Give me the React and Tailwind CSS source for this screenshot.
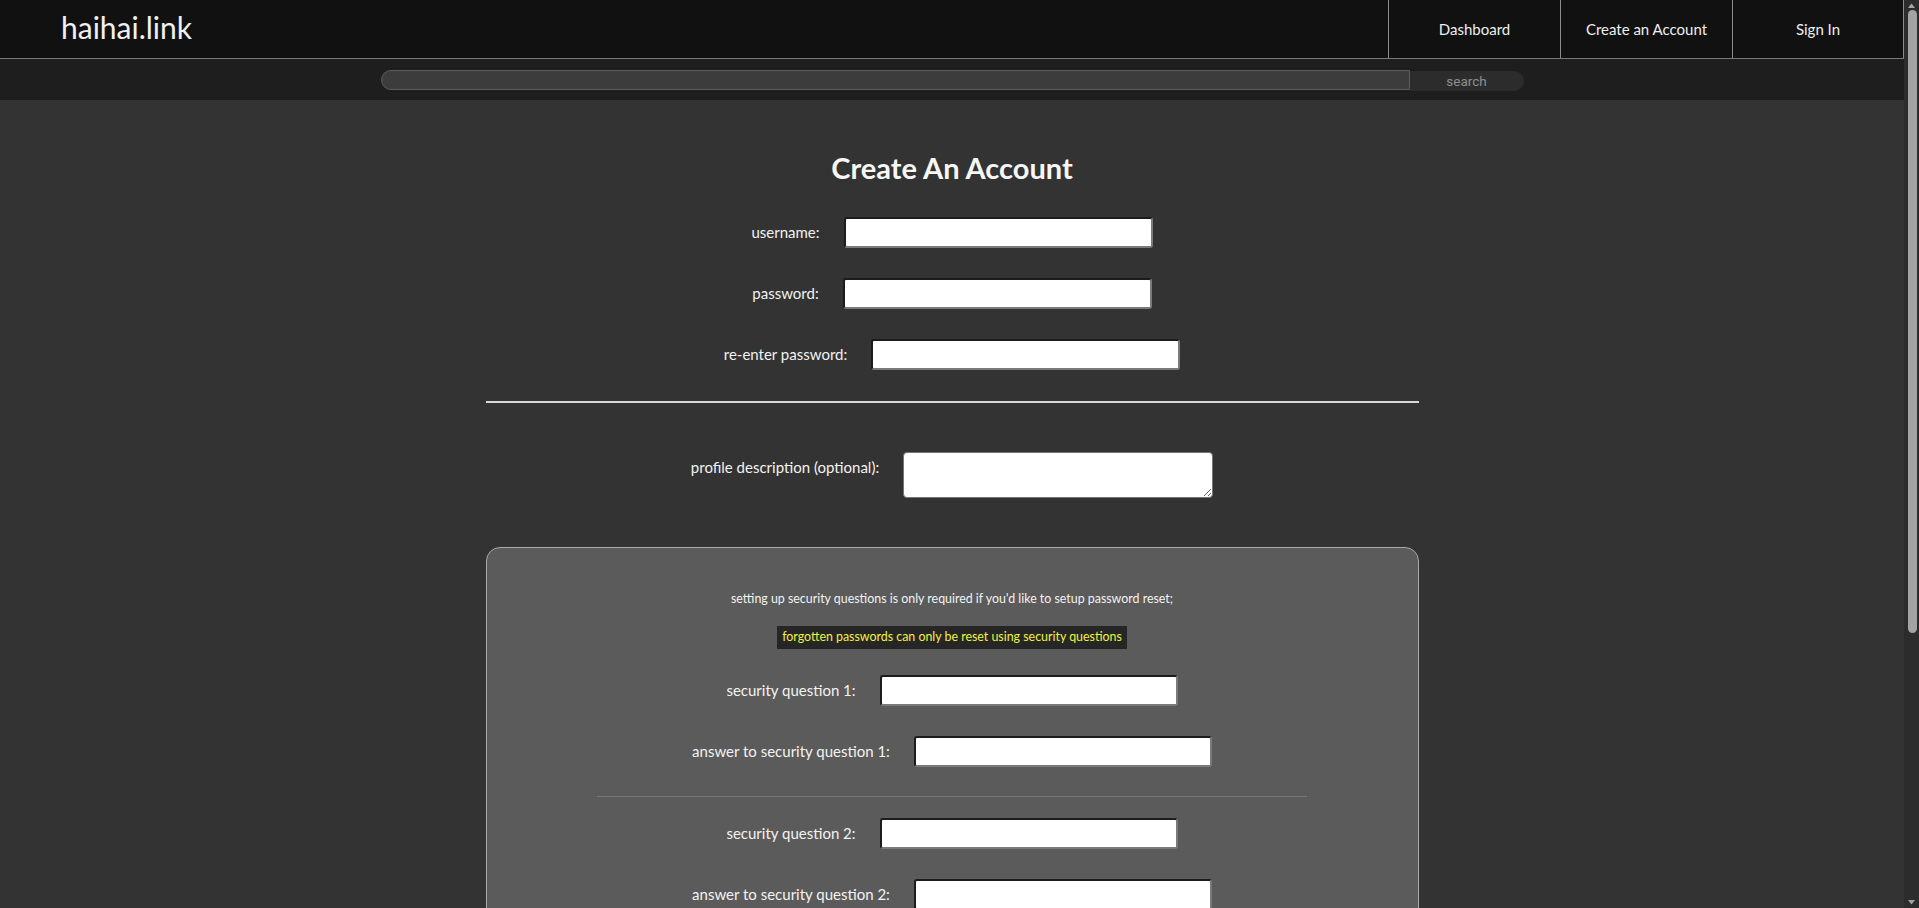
import React from "react";

const font = { fontFamily: "Lato, 'Open Sans', sans-serif" };

function Field({ label, w = "w-[309px]", textarea = false }) {
  return (
    <div className={`flex justify-center gap-[24px] ${textarea ? "items-start" : "items-center"}`}>
      <label className={`text-[15px] text-[#f2f2f2] ${textarea ? "mt-[4px]" : ""}`}>{label}</label>
      {textarea ? (
        <textarea className="w-[310px] h-[46px] bg-white border border-solid border-[#767676] rounded-[4px] outline-none" />
      ) : (
        <input
          type="text"
          className={`${w} h-[31px] bg-white rounded-[3px] border-2 border-solid border-t-[#1c1c1c] border-l-[#1c1c1c] border-r-[#7a7a7a] border-b-[#7a7a7a] outline-none`}
        />
      )}
    </div>
  );
}

function Scrollbar() {
  return (
    <aside className="sticky top-0 h-screen w-[15px] shrink-0 bg-[#2c2c2c] flex flex-col items-center">
      <svg width="9" height="9" viewBox="0 0 9 9" className="mt-[1px] shrink-0">
        <path d="M1 7 L4.5 2.5 L8 7 Z" fill="#a3a3a3" />
      </svg>
      <div className="w-[9px] h-[623px] rounded-full bg-[#a3a3a3] ml-[1px]" />
      <div className="flex-1" />
      <svg width="9" height="9" viewBox="0 0 9 9" className="mb-[1px] shrink-0">
        <path d="M1 2 L4.5 6.5 L8 2 Z" fill="#a3a3a3" />
      </svg>
    </aside>
  );
}

export default function App() {
  return (
    <div style={font} className="flex items-start bg-[#333333] min-h-screen">
      <div className="flex-1 min-w-0">
        <header className="h-[59px] bg-[#111111] border-b border-solid border-[#7a7a7a] flex items-stretch justify-between">
          <div className="pl-[61px] flex items-center text-[30px] text-[#f0f0f0] pb-[3px]">haihai.link</div>
          <nav className="flex">
            {["Dashboard", "Create an Account", "Sign In"].map((t, i) => (
              <a
                key={t}
                className={`w-[172px] flex items-center justify-center text-[15px] text-[#eeeeee] border-l border-solid border-[#8c8c8c] ${i === 2 ? "border-r" : ""}`}
              >
                {t}
              </a>
            ))}
          </nav>
        </header>

        <div className="h-[41px] bg-[#1e1e1e] flex items-center justify-center">
          <div className="flex w-[1143px] items-center">
            <input
              type="text"
              className="flex-1 h-[20px] bg-[#3c3c3c] border border-solid border-[#5c5c5c] rounded-l-full outline-none"
            />
            <button
              className="w-[114px] h-[20px] mt-[2px] bg-[#2c2c2c] rounded-r-full text-[13.5px] text-[#8e8e8e] leading-[20px]"
              style={{ fontFamily: "Roboto, sans-serif" }}
            >
              search
            </button>
          </div>
        </div>

        <main className="flex flex-col items-center pt-[50px] pb-[60px]">
          <h1 className="text-[29px] leading-[36px] font-bold text-[#f7f7f7]">Create An Account</h1>

          <div className="mt-[31px] flex flex-col gap-[30px]">
            <Field label="username:" />
            <Field label="password:" />
            <Field label="re-enter password:" />
          </div>

          <hr className="w-[933px] mt-[31px] border-0 h-[2px] bg-[#d9d9d9]" />

          <div className="mt-[49px]">
            <Field label="profile description (optional):" textarea />
          </div>

          <section className="mt-[49px] w-[933px] bg-[#5b5b5b] border border-solid border-[#a9a9a9] rounded-[14px] flex flex-col items-center pt-[43px] pb-[48px]">
            <p className="text-[12.4px] leading-[16px] text-[#f2f2f2]">
              setting up security questions is only required if you'd like to setup password reset;
            </p>
            <p className="mt-[19px] bg-[#262626] px-[5px] h-[23px] flex items-center text-[12.4px] text-[#f2f23c]">
              forgotten passwords can only be reset using security questions
            </p>

            <div className="mt-[26px] flex flex-col gap-[30px]">
              <Field label="security question 1:" w="w-[298px]" />
              <Field label="answer to security question 1:" w="w-[298px]" />
            </div>
            <div className="w-[710px] h-px bg-[#777777] mt-[29px]" />
            <div className="mt-[21px] flex flex-col gap-[30px]">
              <Field label="security question 2:" w="w-[298px]" />
              <Field label="answer to security question 2:" w="w-[298px]" />
            </div>
            <div className="w-[710px] h-px bg-[#777777] mt-[29px]" />
            <div className="mt-[21px] flex flex-col gap-[30px]">
              <Field label="security question 3:" w="w-[298px]" />
              <Field label="answer to security question 3:" w="w-[298px]" />
            </div>
          </section>

          <button className="mt-[40px] px-[22px] py-[6px] bg-[#1e1e1e] border border-solid border-[#8c8c8c] rounded-[6px] text-[15px] text-[#eeeeee]">
            Create Account
          </button>
        </main>
      </div>
      <Scrollbar />
    </div>
  );
}
